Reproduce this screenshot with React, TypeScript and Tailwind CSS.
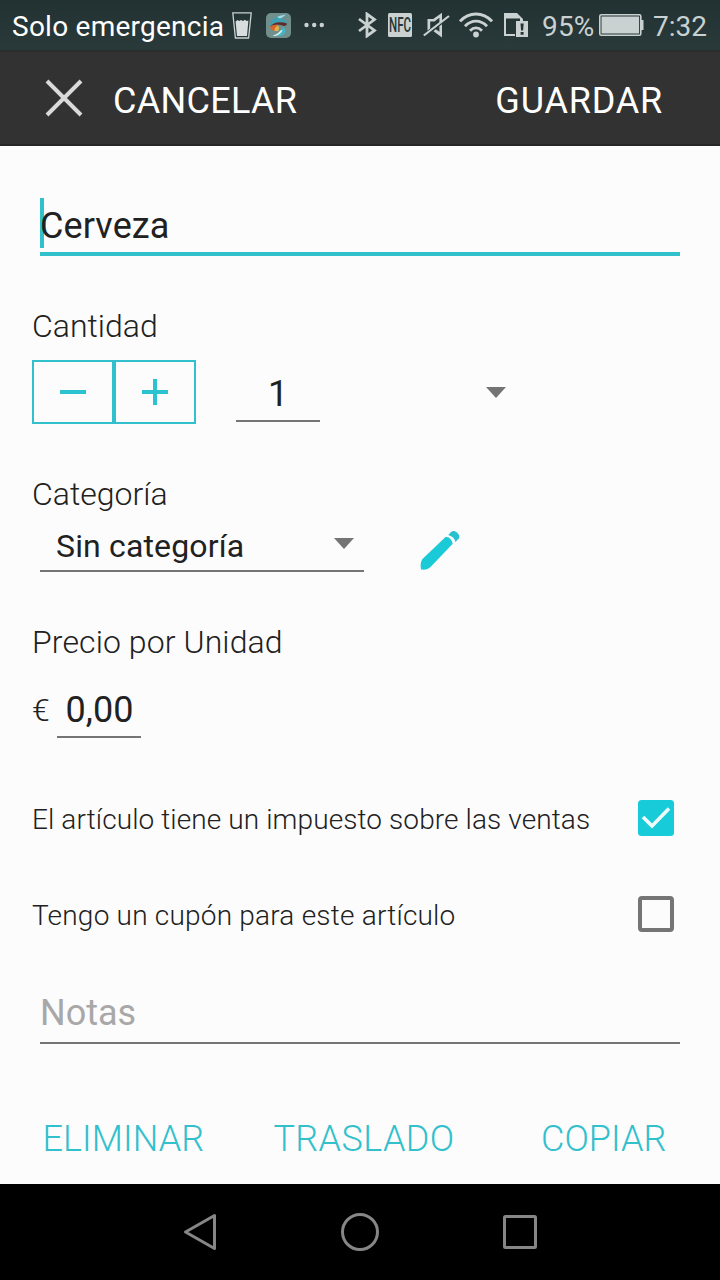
const actions = [
  { label: "ELIMINAR", className: "tracking-[0.1px]" },
  { label: "TRASLADO", className: "pl-1 tracking-[0.4px]" },
  { label: "COPIAR", className: "pl-[6px]" },
];

const options = [
  { id: 1, label: "El artículo tiene un impuesto sobre las ventas", checked: true, className: "tracking-[0.1px]" },
  { id: 2, label: "Tengo un cupón para este artículo", checked: false, className: "tracking-[0.21px]" },
];

function StatusBar() {
  return (
    <div className="flex h-[50px] items-center bg-linear-to-b from-[#223132] to-[#2a3a3b] text-[28px] leading-[50px] text-[#c9d1d1] whitespace-nowrap">
      <span className="ml-3 w-[220px] pt-[3px] tracking-[0.25px] text-white">Solo emergencia</span>

      {/* glass */}
      <svg className="h-[27px] w-5" viewBox="0 0 20 27">
        <path d="M.8.8h18.400L16.600 26H3.400z" fill="none" stroke="#c9d1d1" strokeWidth="1.300" />
        <path d="M3.600 9.500l2-1.500 1.500 1L9 8l2 1 2-1.200L14.500 9l1.900-.5L15 24H5z" fill="#d8dddd" />
      </svg>

      {/* app notification */}
      <svg className="ml-[14px] h-[25px] w-[25px]" viewBox="0 0 25 25">
        <rect width="25" height="25" rx="5" fill="#71908d" />
        <path d="M4 13C4 7 9 3 20 1.500c-1 2.500-4 3.500-6 4.500 4 0 7 1.500 7 5-5-2.500-11-2.500-17 2z" fill="#3f9fb3" />
        <path d="M11 4c3-1.500 6-2 9-2.500-2 2-4 3-6 4z" fill="#a5dbe2" />
        <path d="M4 13.500C8 9 14 8 21 10.500c0 1.500-1.500 2.500-3 2.500-4-1.500-9-2-14 .5z" fill="#5d2b2b" />
        <path d="M4 14c2-1.500 5-2.500 8-2-2 1.500-3 3-3 6-2.500-.5-4.500-1.500-5-4z" fill="#d9652b" />
        <path d="M8.500 18c0-3 1.500-4.500 3.500-5.500 1.500 1.500 1 3.500 0 5.500z" fill="#e5b23f" />
        <path d="M7 23c5-2 8-4 10-9 4 2 3 7-2 9z" fill="#45b5c6" />
        <path d="M7 22.500c4-1 6-3 8-5.500l1.500.5C14.500 21 12 23 7 23z" fill="#d5efed" />
      </svg>

      <svg className="ml-[13px] h-5 w-5" viewBox="0 0 20 20" fill="#c9d1d1">
        <circle cx="2.500" cy="10" r="2.200" />
        <circle cx="10.200" cy="10" r="2.200" />
        <circle cx="17.800" cy="10" r="2.200" />
      </svg>

      {/* bluetooth */}
      <svg className="ml-[34px] h-[26px] w-[19px]" viewBox="0 0 19 26" fill="none" stroke="#c9d1d1" strokeWidth="2.800">
        <path d="M1 7l15.500 11.500-7.500 5.500V2l7.500 5.500L1 19" />
      </svg>

      {/* nfc */}
      <svg className="ml-[11px] h-6 w-6 overflow-visible" viewBox="0 0 24 24">
        <rect width="24" height="24" rx="1.500" fill="#c9d1d1" />
        <text x="1" y="19" fontFamily="Roboto" fontSize="19.500" fontWeight="500" fill="#263636" textLength="22" lengthAdjust="spacingAndGlyphs">
          NFC
        </text>
      </svg>

      {/* muted speaker */}
      <svg className="ml-[11px] h-[26px] w-[27px]" viewBox="0 0 27 26" fill="#c9d1d1">
        <path d="M4.500 18.500V7h5.700L19 .8V9.500l-2.600 1.800V5.800L11.500 9.600H7.200v7z" />
        <path d="M16.400 14.200l2.600-2V25.500l-8.500-6.200 2.300-2 3.600 2.500z" />
        <path d="M.8 23.500L26 4" stroke="#c9d1d1" strokeWidth="2.200" />
      </svg>

      {/* wifi */}
      <svg className="ml-[9px] h-[26px] w-[34px]" viewBox="0 0 34 26" fill="none" stroke="#c9d1d1" strokeWidth="2.900">
        <path d="M1 9.300C10-.5 24-.5 33 9.300" />
        <path d="M6 14.200c6.500-6.800 15.500-6.800 22 0" />
        <path d="M11 18.700c3.700-3.700 8.300-3.700 12 0" />
        <circle cx="17" cy="22.500" r="2.900" fill="#c9d1d1" stroke="none" />
      </svg>

      {/* sd card */}
      <svg className="ml-[11px] h-6 w-6" viewBox="0 0 24 24">
        <path d="M0 0h13l6 6v2h-3V5.500H2V21h9v2H0z" fill="#c9d1d1" />
        <rect x="12" y="8" width="12" height="16" fill="#c9d1d1" />
        <path d="M16.500 10.500h3.200l-.6 7h-2zM16.600 19h3v2.800h-3z" fill="#263636" />
      </svg>

      <span className="ml-[14px] w-[57px] pt-[3px] tracking-[0.2px]">95%</span>

      {/* battery */}
      <svg className="h-[22px] w-[45px]" viewBox="0 0 45 22">
        <rect x=".8" y=".8" width="41" height="20.400" rx="1.500" fill="none" stroke="#c9d1d1" strokeWidth="1.600" />
        <rect x="2.500" y="2.500" width="37.600" height="17" fill="#c9d1d1" />
        <path d="M42 6h2.500v10H42z" fill="#c9d1d1" />
      </svg>
      <span className="ml-[9px] pt-[3px]">7:32</span>
    </div>
  );
}

function Caret({ className }: { className: string }) {
  return (
    <svg className={className} viewBox="0 0 20 11">
      <path d="M0 0h20L10 11z" fill="#747474" />
    </svg>
  );
}

export default function App() {
  return (
    <div className="flex h-[1280px] w-[720px] flex-col bg-[#fcfcfc] font-['Roboto',sans-serif] text-[#212121]">
      <StatusBar />

      <header className="flex h-24 items-center border-t-2 border-b-2 border-t-[#2b2d2d] border-b-[#272727] bg-[#323232] pt-[6px] text-4xl text-white">
        <svg className="-mt-[6px] ml-[45px] h-[38px] w-[38px]" viewBox="0 0 38 38">
          <path d="M2 2l34 34M36 2L2 36" stroke="#dadada" strokeWidth="4" />
        </svg>
        <span className="ml-[30px] tracking-[0.3px]">CANCELAR</span>
        <span className="mr-[57px] ml-auto tracking-[0.8px]">GUARDAR</span>
      </header>

      <main className="flex h-[1038px] flex-col pt-[52px]">
        <div className="relative mx-10 h-[58px] border-b-4 border-[#31c0cc] text-4xl leading-[56px]">
          <span className="absolute top-0 left-0 h-[50px] w-1 bg-[#31c0cc]" />
          <span className="relative tracking-[0.1px]">Cerveza</span>
        </div>

        <h2 className="mt-[50px] ml-8 text-[32px] leading-10 font-light">Cantidad</h2>
        <div className="mt-[14px] ml-8 flex h-16">
          <button className="flex w-[82px] items-center justify-center border-2 border-[#31c0cc]">
            <span className="h-1 w-[26px] bg-[#2bc3d0]" />
          </button>
          <button className="flex w-[82px] items-center justify-center border-2 border-[#31c0cc]">
            <svg className="h-[26px] w-[26px]" viewBox="0 0 26 26">
              <path d="M0 13h26M13 0v26" stroke="#2bc3d0" strokeWidth="4" />
            </svg>
          </button>
          <div className="ml-10 h-[62px] w-[84px] border-b-2 border-[#757575] pt-[7px] text-center text-4xl leading-[54px]">1</div>
          <Caret className="mt-[27px] ml-[166px] h-[11px] w-5" />
        </div>

        <h2 className="mt-[50px] ml-8 text-[32px] leading-10 font-light">Categoría</h2>
        <div className="mt-2 ml-10 flex h-[50px]">
          <div className="flex w-[324px] justify-between border-b-2 border-[#757575] pr-[10px] pl-4 text-[32px] leading-[48px] tracking-[0.15px]">
            Sin categoría
            <Caret className="mt-4 h-[11px] w-5" />
          </div>
          <svg className="mt-2 ml-14 h-10 w-10" viewBox="0 0 40 40">
            <path d="M1 39.500C.3 35 .5 31 3 28.500L25.500 7q3-.5 5 2t2 5L11 36.500C8 39.500 5 40 1 39.500z" fill="#1bcad7" />
            <path d="M28.300 5l3-3.200c1.500-1.500 4-1 6 1s2.800 4.500 1.300 6l-3.200 3.200q-.8-5-7.100-7z" fill="#28c1ce" />
          </svg>
        </div>

        <h2 className="mt-[50px] ml-8 text-[32px] leading-10 font-light tracking-[0.1px]">Precio por Unidad</h2>
        <div className="mt-[22px] ml-8 flex h-[54px] leading-[52px]">
          <span className="w-[25px] text-[32px] font-light">€</span>
          <span className="w-[84px] border-b-2 border-[#757575] pl-px text-center text-4xl leading-[52px]">0,00</span>
        </div>

        <div className="mt-[62px] mr-[46px] ml-8 flex flex-col gap-[60px]">
          {options.map(({ id, label, checked, className }) => (
            <div key={id} className="flex h-9 items-center justify-between text-[28px] font-light">
              <span className={`pt-1 ${className}`}>{label}</span>
              {checked ? (
                <svg className="h-9 w-9" viewBox="0 0 36 36">
                  <rect width="36" height="36" rx="3.500" fill="#17cbd9" />
                  <path d="M5 17l9 9L31 8.500" fill="none" stroke="#effcfd" strokeWidth="3.600" />
                </svg>
              ) : (
                <span className="h-9 w-9 rounded-[4px] border-4 border-[#757575]" />
              )}
            </div>
          ))}
        </div>

        <div className="mx-10 mt-[50px] h-[62px] border-b-2 border-[#757575] text-4xl leading-[62px] text-[#a8a8a8]">Notas</div>

        <div className="mt-[75px] grid grid-cols-3 pl-1 text-center text-4xl leading-10 font-light text-[#31c0cc]">
          {actions.map(({ label, className }) => (
            <button key={label} className={className}>
              {label}
            </button>
          ))}
        </div>
      </main>

      <nav className="flex h-24 items-center justify-center gap-[120px] bg-black">
        <svg className="h-10 w-10" viewBox="0 0 40 40" fill="none" stroke="#868686" strokeWidth="3">
          <path d="M34.500 3.500v33L5.500 20z" strokeLinejoin="round" />
        </svg>
        <svg className="h-10 w-10" viewBox="0 0 40 40" fill="none" stroke="#868686" strokeWidth="3">
          <circle cx="20" cy="20" r="17.500" />
        </svg>
        <svg className="h-10 w-10" viewBox="0 0 40 40" fill="none" stroke="#868686" strokeWidth="3">
          <rect x="4.500" y="4.500" width="31" height="31" rx="1" />
        </svg>
      </nav>
    </div>
  );
}
